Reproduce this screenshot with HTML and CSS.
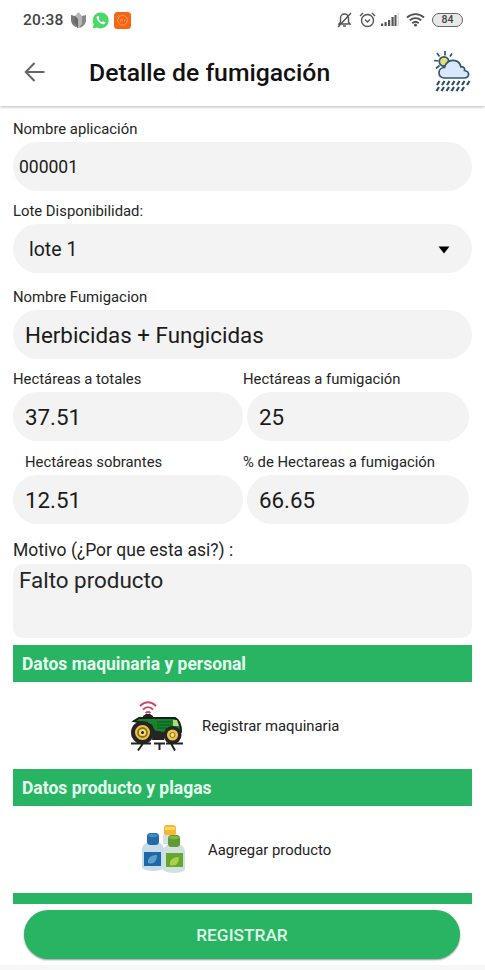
FILE: index.html
```html
<!DOCTYPE html>
<html lang="es">
<head>
<meta charset="utf-8">
<title>Detalle de fumigación</title>
<link rel="stylesheet" href="styles.css">
</head>
<body>
<div class="screen">
  <header class="header">
    <div class="status">
      <span class="clock">20:38</span>
      <svg class="st-leaf" width="17" height="17" viewBox="0 0 17 17"><path d="M1 3l4 1 1 11C3 14 1 11 1 8z" fill="#777"/><path d="M16 3l-4 1-3 12c4-1 7-4 7-8z" fill="#888"/><path d="M8.500 0L5 4v9l3 3.500L12 12V4z" fill="#b5b5b5"/><path d="M5 4l3 3v9C5.500 14 4 11 5 4z" fill="#666"/></svg>
      <svg class="st-wa" width="17" height="17" viewBox="0 0 17 17"><path d="M.5 16.500l1.200-4.200A8 8 0 1 1 4.800 15.400z" fill="#49d967"/><path d="M5.500 4c-1.500 1-1.200 3 .7 5.200s4.800 4 6.600 2.600c.7-.7.7-1.300.2-1.600l-1.700-.9c-.9.300-1 1-1.500.8-1.500-.6-2.500-1.700-3-3 .6-.6.8-.9.600-1.300L6.600 4z" fill="#fff"/></svg>
      <svg class="st-mi" width="17" height="17" viewBox="0 0 17 17"><rect width="17" height="17" rx="3.500" fill="#f8640f"/><circle cx="8.500" cy="8.300" r="4.800" fill="none" stroke="#ffa070"/><path d="M6.500 9.500V7.500h2v2M10.500 7.500v2M3 5l2-2" fill="none" stroke="#ffa070" stroke-width=".8"/></svg>
      <svg class="st-bell" width="15" height="16" viewBox="0 0 15 16" fill="none" stroke="#555" stroke-width="1.400"><path d="M2 12h11l-1.500-2V6c0-2-1.500-4-4-4s-4 2-4 4v4zM6 14h3M14 1L1 15"/></svg>
      <svg class="st-alarm" width="17" height="16" viewBox="0 0 17 16" fill="none" stroke="#555" stroke-width="1.400"><circle cx="8.500" cy="8.500" r="6"/><path d="M1 4l3-3M16 4l-3-3M6 7.500L8.500 10 11 7.500"/></svg>
      <svg class="st-signal" width="18" height="14" viewBox="0 0 18 14"><path d="M0 10.500h2.200V13H0zM3.500 9h2.200v4H3.500zM7 7h2.200v6H7zM10.500 4h2.200v9h-2.200zM13.500 2h2v11h-2z" fill="#555"/><path d="M16.700 0h1v13h-1z" fill="#ccc"/></svg>
      <svg class="st-wifi" width="19" height="14" viewBox="0 0 19 14" fill="none" stroke="#505050" stroke-width="1.900"><path d="M1 4.500c5-4.500 12-4.500 17 0M3.700 7.400c3.500-3 8.100-3 11.600 0M6.300 10.200c2-1.700 4.400-1.700 6.400 0"/><circle cx="9.500" cy="12" r="1.500" fill="#505050" stroke="none"/></svg>
      <span class="battery">84</span>
    </div>
    <div class="titlebar">
      <svg class="back" width="22" height="20" viewBox="0 0 22 20" fill="none" stroke="#666" stroke-width="2"><path d="M20.500 10H2M10.500 1L1.700 10l8.800 9"/></svg>
      <h1>Detalle de fumigación</h1>
      <svg class="weather" width="38" height="42" viewBox="0 0 38 42"><g fill="none" stroke="#315775" stroke-width="1.700"><path d="M12 0v4.500M19 2.500l-2 3M4 2l2.500 3.500M1 9.500l4.500.5M3 17.500l3.500-3"/><circle cx="11" cy="10.500" r="4.700" fill="#eadf72"/><path d="M11 27c-7-1-6.500-10.500.5-10.500C14 7 26 7 28 16c3-.5 4 1.500 3.500 3.500 6 1 5 7.500-.5 7.500z" fill="#d9e8ff"/></g><g stroke="#274e6a" stroke-width="2.200"><path d="M6.500 30L4 34M11.500 30L9 34M16.500 30L14 34M21.500 30L19 34M26.500 30L24 34M31.500 30L29 34M36.500 30L34 34"/><path d="M6 36l-2.500 4M11 36l-2.500 4M16 36l-2.500 4M21 36l-2.500 4M26 36l-2.500 4M31 36l-2.500 4"/></g></svg>
    </div>
  </header>
  <main class="form">
    <section class="group"><div class="label l-name">Nombre aplicación</div><div class="field code">000001</div></section>
    <section class="group lot"><div class="label l-lot">Lote Disponibilidad:</div><div class="field select"><span>lote 1</span><svg width="12" height="8" viewBox="0 0 12 8"><path d="M.5.500h11L6 7.500z"/></svg></div></section>
    <section class="group kind"><div class="label">Nombre Fumigacion</div><div class="field"><span class="v-kind">Herbicidas + Fungicidas</span></div></section>
    <section class="pair">
      <div class="left"><div class="label">Hectáreas a totales</div><div class="field">37.51</div></div>
      <div class="right"><div class="label">Hectáreas a fumigación</div><div class="field">25</div></div>
    </section>
    <section class="pair second">
      <div class="left"><div class="label indent">Hectáreas sobrantes</div><div class="field">12.51</div></div>
      <div class="right"><div class="label">% de Hectareas a fumigación</div><div class="field">66.65</div></div>
    </section>
    <section class="reason"><div class="label big">Motivo (¿Por que esta asi?) :</div><div class="area">Falto producto</div></section>
    <h2>Datos maquinaria y personal</h2>
    <div class="action">
      <svg class="tractor" width="54" height="52" viewBox="0 0 54 52"><g fill="none" stroke="#c94b65" stroke-width="2"><path d="M9 6c5-5 11-5 16 0M12 9.500c3-3 7-3 10 0M14.500 13c2-1.500 3.500-1.500 5 0"/></g><path d="M12 19v-3l3-2h4l3 2v3" fill="#222"/><path d="M3 21l5-3h36c4 2 6 7 6 14l-4 5H26L20 25z" fill="#18832c" stroke="#152017" stroke-width="2"/><path d="M26 22h14M26 25h14M26 28h10" stroke="#0a6a20" stroke-width="1.300"/><path d="M42 20h4l2 6h-6z" fill="#b8d77a"/><path d="M22 30l11 2v8H21z" fill="#252525"/><circle cx="11.500" cy="32.500" r="9.500" fill="#efc544" stroke="#252525" stroke-width="4"/><circle cx="11.500" cy="32.500" r="4.500" fill="#f6dc72" stroke="#8a6c24" stroke-width="1.800"/><circle cx="11.500" cy="32.500" r="1.500" fill="#222"/><circle cx="41.500" cy="35" r="7.300" fill="#efc544" stroke="#252525" stroke-width="3.500"/><circle cx="41.500" cy="35" r="2.500" fill="#fae176" stroke="#8a6c24"/><path d="M0 43.500h20M23 43.500h11M35 43.500h17M12 43.500l-5 7M28.500 43.500v6.500M40 43.500l4 7" fill="none" stroke="#222" stroke-width="2"/></svg>
      <span class="a-machine">Registrar maquinaria</span>
    </div>
    <h2>Datos producto y plagas</h2>
    <div class="action product">
      <svg class="bottles" width="46" height="52" viewBox="0 0 46 52"><rect x="23" y="1" width="12" height="11" rx="3" fill="#f5b834"/><path d="M24 3h10v3H24z" fill="#ffd65b"/><path d="M22 11h13v9H22z" fill="#d5e0e2"/><path d="M5 19h14c3 2 4 4 4 8v17c-4 4-18 4-22 0V27c0-4 1-6 4-8z" fill="#c8dcea"/><rect x="6" y="9" width="12" height="12" rx="3.500" fill="#2669a5"/><ellipse cx="12" cy="11.500" rx="4.800" ry="1.800" fill="#3e8fca"/><path d="M3 28h17v14H3z" fill="#1d68a8"/><path d="M7 39c-1-5 3-8 9-8 0 6-3 10-9 8z" fill="#609fca"/><path d="M26 21h14c3 2 4 4 4 8v17c-4 4-18 4-22 0V29c0-4 1-6 4-8z" fill="#cfe2df"/><rect x="27" y="11" width="12" height="12" rx="3.500" fill="#5e9c32"/><ellipse cx="33" cy="13.500" rx="4.800" ry="1.800" fill="#83b644"/><path d="M25 29h17v14H25z" fill="#66a72d"/><path d="M29 41c-1-5 3-8 9-8 0 6-3 10-9 8z" fill="#a9cf50"/></svg>
      <span class="a-product">Aagregar producto</span>
    </div>
    <div class="next-section"></div>
  </main>
  <footer><button type="button">REGISTRAR</button></footer>
</div>
</body>
</html>
```
FILE: styles.css
```css
* { box-sizing: border-box; }
body { margin: 0; background: #fff; font-family: Roboto, sans-serif; color: #252525; }
.screen { width: 485px; height: 970px; overflow: hidden; display: flex; flex-direction: column; }
.header { height: 106px; flex: none; background: #fff; box-shadow: 0 1px 3px rgba(0,0,0,.28); }
.status { height: 40px; padding: 0 22px 0 23px; display: flex; align-items: center; }
.clock { width: 47px; font-size: 15.500px; font-weight: 500; letter-spacing: .25px; color: #444; }
.st-wa { margin-left: 5px; }
.st-mi { margin-left: 5px; }
.st-bell { margin-left: auto; }
.st-alarm { margin-left: 7px; }
.st-signal { margin-left: 5px; }
.st-wifi { margin-left: 7px; }
.battery { width: 31px; height: 14px; margin-left: 7px; border: 1.500px solid #666; border-radius: 7px; background: #e8e8e8; text-align: center; font-size: 10.500px; line-height: 12px; font-weight: 500; color: #444; }
.titlebar { height: 66px; display: flex; align-items: center; padding: 0 14px 3px 24px; }
h1 { margin: 2px 0 0 43px; font-size: 24.750px; line-height: 32px; font-weight: 500; color: #111; white-space: nowrap; }
.weather { margin: 1px 0 0 auto; }
.form { height: 798px; flex: none; overflow: hidden; padding: 10px 13px 0; }
.label { height: 25px; line-height: 25px; font-size: 14.850px; white-space: nowrap; }
.field { height: 49px; padding: 1px 12px 0; border-radius: 24.500px; background: #f3f3f3; display: flex; align-items: center; font-size: 22.350px; color: #1b1b1b; white-space: nowrap; }
.l-name, .kind .label { height: 26px; line-height: 26px; }
.code { padding-left: 6px; font-size: 17.500px; }
.lot { margin-top: 8px; }
.select { padding: 2px 22px 0 16px; font-size: 19.500px; justify-content: space-between; }
.kind { margin-top: 11px; }
.pair { margin-top: 8px; display: grid; grid-template-columns: 230px 226px; }
.second { margin-top: 9px; }
.right .field { width: 222px; margin-left: 4px; }
.indent { padding-left: 12px; }
.reason { margin-top: 13px; }
.big { height: 27px; line-height: 26px; font-size: 17.500px; }
.area { height: 74px; padding: 2px 6px; border-radius: 10px; background: #f3f3f3; font-size: 22.400px; line-height: 29px; }
h2 { margin: 0; height: 37px; padding-left: 9px; background: #29b463; color: #e6fff0; font-size: 17.500px; line-height: 38px; font-weight: 700; white-space: nowrap; }
.reason + h2 { margin-top: 7px; }
.action { height: 87px; display: flex; align-items: center; padding-left: 118px; font-size: 14.850px; color: #222; }
.action span { margin-left: 17px; padding-top: 1px; white-space: nowrap; }
.product { padding-left: 128px; }
.product span { margin-left: 21px; }
.next-section { height: 37px; background: #29b463; }
footer { height: 66px; flex: none; padding: 6px 25px 0 24px; }
footer::after { content: ""; display: block; height: 5px; margin: 6px -25px 0 -24px; background: #f7f7f7; }
button { display: block; width: 436px; height: 49px; padding: 1px 0 0; border: 0; border-radius: 25px; background: #29b463; box-shadow: 0 1px 2px rgba(0,0,0,.4); color: #dcfbe8; font: 500 17.300px Roboto, sans-serif; }
```
